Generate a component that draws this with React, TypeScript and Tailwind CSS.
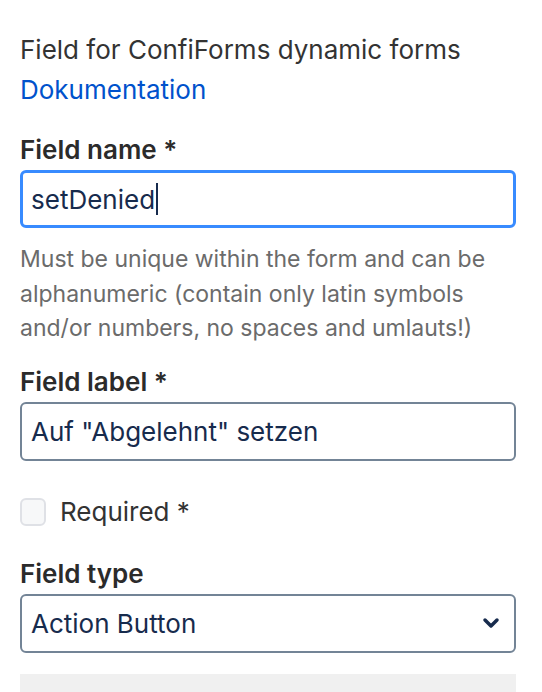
export default function App() {
  return (
    <div
      className="min-h-[692px] bg-white pl-[20px] pr-[26px] pt-[30px] text-[#333333]"
      style={{ fontFamily: 'Inter, "Noto Sans", sans-serif' }}
    >
      <div className="text-[26px] leading-[40px]">Field for ConfiForms dynamic forms</div>
      <a href="#" className="block text-[26px] leading-[40px] text-[#0052cc]">
        Dokumentation
      </a>

      <label className="mt-[24px] block text-[26px] font-semibold leading-[32px] text-[#2b2b2b]">Field name *</label>
      <div className="mt-[4px] flex h-[58px] items-center rounded-[6px] border-[3px] border-[#388bff] px-[8px] text-[26px] text-[#172b4d]">
        setDenied
        <span className="ml-[1px] inline-block h-[32px] w-[2px] bg-[#172b4d]" />
      </div>
      <p className="mt-[14px] text-[23px] leading-[34.5px] text-[#6b6b6b]">
        Must be unique within the form and can be alphanumeric (contain only latin symbols and/or numbers, no
        spaces and umlauts!)
      </p>

      <label className="mt-[20px] block text-[26px] font-semibold leading-[32px] text-[#2b2b2b]">Field label *</label>
      <div className="mt-[4px] flex h-[59px] items-center rounded-[6px] border-2 border-[#738496] px-[9px] text-[26px] text-[#172b4d]">
        Auf "Abgelehnt" setzen
      </div>

      <div className="mt-[37px] flex h-[28px] items-center gap-[14px]">
        <span className="h-[28px] w-[26px] rounded-[6px] border-2 border-[#dfe1e6] bg-[#f7f8f9]" />
        <span className="text-[26px]">Required *</span>
      </div>

      <label className="mt-[32px] block text-[26px] font-semibold leading-[32px] text-[#2b2b2b]">Field type</label>
      <div className="mt-[4px] flex h-[59px] items-center justify-between rounded-[6px] border-2 border-[#738496] pl-[9px] pr-[14px] text-[26px] text-[#172b4d]">
        Action Button
        <svg width="18" height="12" viewBox="0 0 18 12" fill="none">
          <path d="M3 3l6 6 6-6" stroke="#172b4d" strokeWidth="3.5" strokeLinecap="round" strokeLinejoin="round" />
        </svg>
      </div>

      <div className="mt-[21px] h-[40px] bg-[#f0f0f0]" />
    </div>
  );
}
